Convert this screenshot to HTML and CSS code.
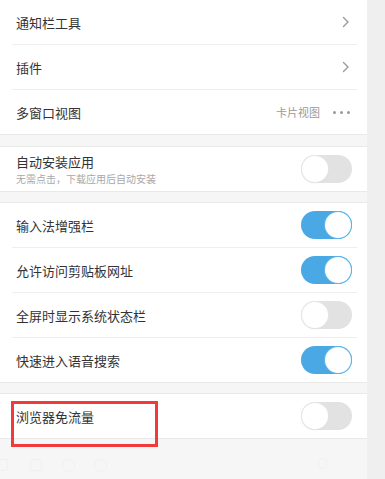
FILE: index.html
```html
<!DOCTYPE html>
<html lang="zh-CN">
<head>
<meta charset="utf-8">
<title>设置</title>
<link rel="stylesheet" href="styles.css">
</head>
<body>
<div class="screen">
  <main class="panel">
    <section class="group group-first">
      <div class="row">
        <span class="label">通知栏工具</span>
        <svg class="chev" viewBox="0 0 8 12" width="8" height="12"><path d="M1.5 1.5 L6 6 L1.5 10.5" fill="none" stroke="#9a9a9a" stroke-width="1.4" stroke-linecap="round" stroke-linejoin="round"/></svg>
      </div>
      <div class="row">
        <span class="label">插件</span>
        <svg class="chev" viewBox="0 0 8 12" width="8" height="12"><path d="M1.5 1.5 L6 6 L1.5 10.5" fill="none" stroke="#9a9a9a" stroke-width="1.4" stroke-linecap="round" stroke-linejoin="round"/></svg>
      </div>
      <div class="row">
        <span class="label">多窗口视图</span>
        <span class="value">卡片视图</span>
        <span class="dots"><i></i><i></i><i></i></span>
      </div>
    </section>

    <section class="group">
      <div class="row">
        <div class="text-stack">
          <span class="label">自动安装应用</span>
          <span class="sub">无需点击，下载应用后自动安装</span>
        </div>
        <span class="toggle"></span>
      </div>
    </section>

    <section class="group">
      <div class="row">
        <span class="label">输入法增强栏</span>
        <span class="toggle on"></span>
      </div>
      <div class="row">
        <span class="label">允许访问剪贴板网址</span>
        <span class="toggle on"></span>
      </div>
      <div class="row">
        <span class="label">全屏时显示系统状态栏</span>
        <span class="toggle"></span>
      </div>
      <div class="row">
        <span class="label">快速进入语音搜索</span>
        <span class="toggle on"></span>
      </div>
    </section>

    <section class="group">
      <div class="row">
        <span class="label">浏览器免流量</span>
        <span class="toggle"></span>
      </div>
    </section>

    <div class="footer">
      <span class="ghost g1"></span>
      <span class="ghost g2"></span>
      <span class="ghost g3"></span>
      <span class="ghost g4"></span>
      <span class="ghost g5"></span>
    </div>

    <div class="highlight"></div>
  </main>
  <aside class="strip"></aside>
</div>
</body>
</html>
```

FILE: styles.css
```css
* { box-sizing: border-box; }

html, body {
  margin: 0;
  padding: 0;
  height: 100%;
}

body {
  font-family: "Noto Sans CJK SC", "Noto Sans", sans-serif;
  background: #efefef;
  overflow: hidden;
}

.screen {
  display: flex;
  width: 385px;
  height: 479px;
}

.panel {
  position: relative;
  width: 367px;
  height: 479px;
  background: #f6f6f6;
  display: flex;
  flex-direction: column;
}

.strip {
  flex: 1;
  background: #efefef;
}

.group {
  background: #ffffff;
  border-top: 1px solid #e9e9e9;
  border-bottom: 1px solid #e9e9e9;
  padding: 0 10px 0 12px;
  margin-bottom: 10px;
}

.group-first {
  border-top: none;
  margin-bottom: 11px;
}

.row {
  height: 44px;
  display: flex;
  align-items: center;
  padding-left: 4px;
  padding-right: 4px;
}

.row + .row {
  border-top: 1px solid #eeeeee;
  height: 45px;
}

.label {
  font-size: 13px;
  color: #333333;
  flex: 1;
  line-height: 1;
}

.text-stack {
  flex: 1;
  display: flex;
  flex-direction: column;
  gap: 6px;
  padding-top: 1px;
}

.sub {
  font-size: 10px;
  color: #a8a8a8;
  line-height: 1;
}

.chev {
  margin-right: 3px;
}

.value {
  font-size: 11px;
  color: #9a9a9a;
  margin-right: 13px;
}

.dots {
  display: flex;
  gap: 4px;
  margin-right: 3px;
}

.dots i {
  width: 3px;
  height: 3px;
  border-radius: 50%;
  background: #9a9a9a;
}

.toggle {
  position: relative;
  width: 51px;
  height: 28px;
  margin-right: 1px;
  border-radius: 14px;
  background: #e2e2e2;
  flex: none;
}

.toggle::after {
  content: "";
  position: absolute;
  top: 1px;
  left: 1px;
  width: 26px;
  height: 26px;
  border-radius: 50%;
  background: #ffffff;
  box-shadow: 0 0 0 1px #e6e6e6, 0 1px 2px rgba(0, 0, 0, 0.08);
}

.toggle.on {
  background: #4aa9e5;
}

.toggle.on::after {
  left: auto;
  right: 1px;
  box-shadow: 0 0 0 1px #5fb4ea;
}

.footer {
  position: relative;
  flex: 1;
  margin-top: -10px;
}

.ghost {
  position: absolute;
  border: 1px solid #f0f0f0;
  border-radius: 50%;
}

.g1 { left: -4px; top: 20px; width: 12px; height: 12px; border-radius: 2px; }
.g2 { left: 30px; top: 20px; width: 12px; height: 12px; border-radius: 2px; }
.g3 { left: 62px; top: 20px; width: 13px; height: 13px; }
.g4 { left: 94px; top: 20px; width: 13px; height: 13px; }
.g5 { left: 318px; top: 19px; width: 9px; height: 11px; border-radius: 3px; }

.highlight {
  position: absolute;
  left: 11px;
  top: 401px;
  width: 147px;
  height: 46px;
  border: 3px solid #f23a3a;
}
```
